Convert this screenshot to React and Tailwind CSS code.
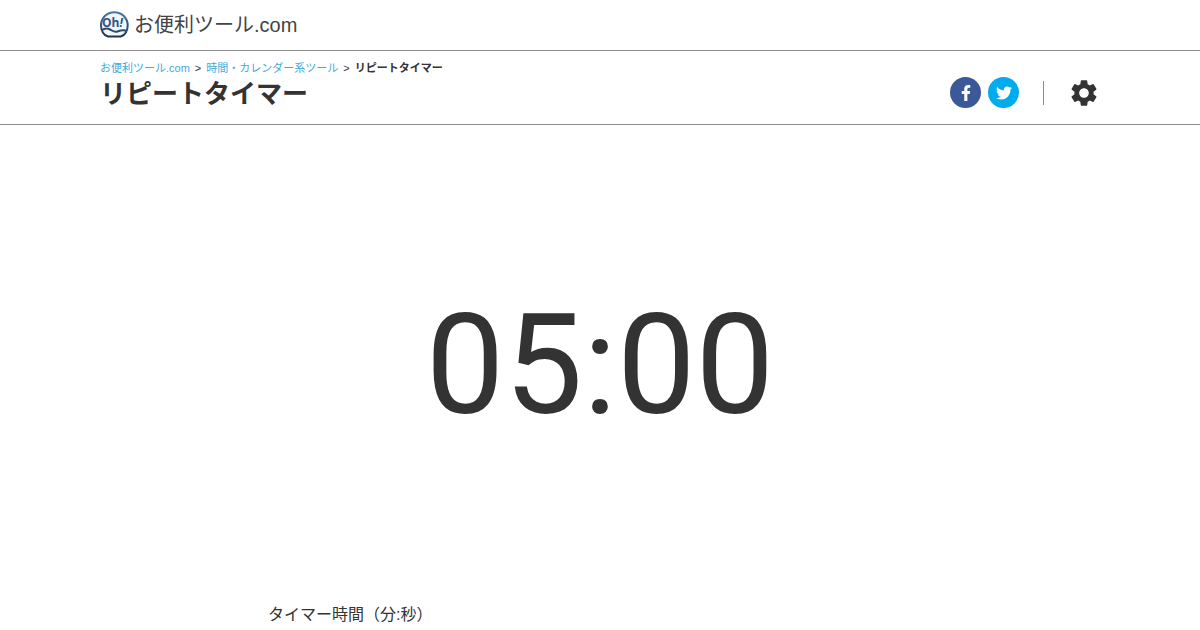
import { FaFacebookF, FaTwitter } from 'react-icons/fa';
import { MdSettings } from 'react-icons/md';

const Logo = () => (
  <svg viewBox="0 0 30 28" className="w-[30px] h-7" aria-hidden="true">
    <defs>
      <linearGradient id="logo-ring" x1="0" y1="0" x2="0" y2="1">
        <stop offset="0" stopColor="#4a76ad" />
        <stop offset="1" stopColor="#1f3350" />
      </linearGradient>
    </defs>
    <path
      d="M8 25.500C3.500 24.500 1 19.500 1 14.500C1 7 6.800 1.200 14.300 1.200s13.400 5.800 13.400 13.300c0 5-2.500 10-7 11z"
      fill="#f3f7fc"
      stroke="url(#logo-ring)"
      strokeWidth="2"
      strokeLinejoin="round"
    />
    <path
      d="M1.500 19.500c2.500-2 6-2.300 8.500-1c3 1.600 4.600 3 7.400 2c3.300-1.200 6-2 9.600-.5"
      fill="none"
      stroke="#2c4a72"
      strokeWidth="2"
    />
    <text x="2" y="16" fill="#2f5488" fontSize="12" fontWeight="700" fontFamily="Open Sans, sans-serif">
      Oh<tspan fontStyle="italic">!</tspan>
    </text>
  </svg>
);

const Header = () => (
  <header className="border-b border-[#8c8c8c]">
    <div className="max-w-[1000px] h-[50px] mx-auto flex items-center">
      <a href="/" className="flex items-center gap-1 text-xl text-[#444]">
        <Logo />
        <span>お便利ツール.com</span>
      </a>
    </div>
  </header>
);

const Breadcrumb = () => (
  <nav className="flex gap-[5px] text-[11px] leading-4" aria-label="breadcrumb">
    <a href="/" className="text-[#42a9d8]">お便利ツール.com</a>
    <span>&gt;</span>
    <a href="/time" className="text-[#42a9d8]">時間・カレンダー系ツール</a>
    <span>&gt;</span>
    <span className="font-bold">リピートタイマー</span>
  </nav>
);

const TitleBar = () => (
  <div className="border-b border-[#8c8c8c]">
    <div className="max-w-[1000px] h-[73px] mx-auto flex justify-between">
      <div className="pt-[9px]">
        <Breadcrumb />
        <h1 className="text-[26px] leading-9 font-bold">リピートタイマー</h1>
      </div>

      {/* Share links and settings */}
      <div className="flex items-center pt-2.5">
        <div className="flex gap-[7px]">
          <a
            href="#facebook"
            aria-label="Facebook"
            className="size-[31px] rounded-full bg-[#3b5998] text-white flex items-center justify-center"
          >
            <FaFacebookF size={16} />
          </a>
          <a
            href="#twitter"
            aria-label="Twitter"
            className="size-[31px] rounded-full bg-[#00acee] text-white flex items-center justify-center"
          >
            <FaTwitter size={16} />
          </a>
        </div>
        <div className="w-px h-6 mx-6 bg-[#8c8c8c]" />
        <button type="button" aria-label="設定">
          <MdSettings size={32} />
        </button>
      </div>
    </div>
  </div>
);

const App = () => (
  <div className="bg-white text-[#333] font-['Liberation_Sans','Noto_Sans_CJK_JP',sans-serif]">
    <Header />
    <TitleBar />
    <main>
      <div className="py-40 text-center">
        <time className="block font-[Roboto,sans-serif] text-[140px] leading-[160px]">05:00</time>
      </div>
      <section className="max-w-[664px] mx-auto">
        <h2 className="text-base leading-5">タイマー時間（分:秒）</h2>
      </section>
    </main>
  </div>
);

export default App;
